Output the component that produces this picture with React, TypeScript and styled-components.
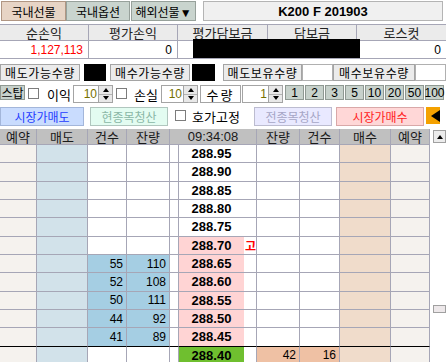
import React from "react";
import styled, { createGlobalStyle } from "styled-components";

const FONT = `"Liberation Sans", "Noto Sans CJK KR", sans-serif`;
const LINE = "#a6a6b6";

const GlobalStyle = createGlobalStyle`
  html, body { margin: 0; padding: 0; background: #fff; }
  body { font-family: ${FONT}; }
  * { box-sizing: border-box; }
`;

const Root = styled.div`
  width: 446px;
  height: 362px;
  overflow: hidden;
  background: #fff;
  display: flex;
  flex-direction: column;
  font-family: ${FONT};
  color: #000;
`;

/* ---------- top tabs ---------- */
const TopBar = styled.div`
  display: flex;
  height: 20px;
  margin-top: 1px;
`;

const Tab = styled.div<{ $active?: boolean; $w: number; $ml: number }>`
  width: ${(p) => p.$w}px;
  margin-left: ${(p) => p.$ml}px;
  height: 20px;
  display: flex;
  align-items: center;
  justify-content: center;
  font-size: 12px;
  background: ${(p) => (p.$active ? "#e7d4c5" : "#c9d4ce")};
  border: 1px solid ${(p) => (p.$active ? "#b09683" : "#97a19b")};
`;

const TitleBox = styled.div`
  margin-left: 7px;
  width: 240px;
  height: 20px;
  display: flex;
  align-items: center;
  justify-content: center;
  background: #f0f0f0;
  border: 1px solid #b4b4b4;
  font-weight: bold;
  font-size: 13px;
`;

/* ---------- info table ---------- */
const InfoGrid = styled.div`
  position: relative;
  margin-top: 3px;
  display: grid;
  grid-template-columns: 89px 89px 90px 89px 89px;
  grid-template-rows: 16px 17px;
  border-top: 1px solid ${LINE};
  border-bottom: 1px solid ${LINE};
`;

const InfoHead = styled.div<{ $last?: boolean }>`
  background: #ebebeb;
  border-right: ${(p) => (p.$last ? "none" : `1px solid ${LINE}`)};
  border-bottom: 1px solid ${LINE};
  display: flex;
  align-items: center;
  justify-content: center;
  font-size: 13px;
  color: #222;
`;

const InfoValue = styled.div<{ $red?: boolean; $last?: boolean }>`
  background: #fff;
  border-right: ${(p) => (p.$last ? "none" : `1px solid ${LINE}`)};
  display: flex;
  align-items: center;
  justify-content: flex-end;
  padding-right: 5px;
  font-size: 12px;
  color: ${(p) => (p.$red ? "#ff0000" : "#000")};
`;

const Redact = styled.div`
  position: absolute;
  left: 193px;
  top: 14px;
  width: 167px;
  height: 19px;
  background: #000;
`;

/* ---------- quantity row ---------- */
const QtyRow = styled.div`
  display: flex;
  margin-top: 5px;
  height: 17px;
`;

const QtyLabel = styled.div<{ $w: number; $ml: number }>`
  width: ${(p) => p.$w}px;
  margin-left: ${(p) => p.$ml}px;
  background: #ebebeb;
  border: 1px solid #a4a4a4;
  display: flex;
  align-items: center;
  justify-content: center;
  font-size: 12px;
  letter-spacing: 0.6px;
`;

const QtyValue = styled.div<{ $w: number; $ml: number; $black?: boolean }>`
  width: ${(p) => p.$w}px;
  margin-left: ${(p) => p.$ml}px;
  background: ${(p) => (p.$black ? "#000" : "#fff")};
  border: 1px solid ${(p) => (p.$black ? "#000" : "#b0b0b0")};
`;

/* ---------- stop row ---------- */
const StopRow = styled.div`
  display: flex;
  align-items: flex-start;
  margin-top: 4px;
  height: 18px;
`;

const GreenButton = styled.div<{ $w: number; $ml: number }>`
  width: ${(p) => p.$w}px;
  margin-left: ${(p) => p.$ml}px;
  height: 15px;
  background: #c7d1cb;
  border: 1px solid #8f9992;
  display: flex;
  align-items: center;
  justify-content: center;
  font-size: 12px;
`;

const CheckBox = styled.span<{ $ml: number; $mt?: number }>`
  display: block;
  width: 11px;
  height: 11px;
  margin-left: ${(p) => p.$ml}px;
  margin-top: ${(p) => p.$mt ?? 3}px;
  background: #fff;
  border: 1px solid #7c7c7c;
`;

const FieldLabel = styled.span<{ $w: number; $ml: number }>`
  width: ${(p) => p.$w}px;
  margin-left: ${(p) => p.$ml}px;
  height: 18px;
  display: flex;
  align-items: center;
  font-size: 13px;
`;

const Spinner = styled.div<{ $w: number; $ml: number }>`
  width: ${(p) => p.$w}px;
  margin-left: ${(p) => p.$ml}px;
  height: 18px;
  display: flex;
  border: 1px solid #a4a4a4;
  background: #fff;
`;

const SpinValue = styled.div`
  flex: 1;
  display: flex;
  align-items: center;
  justify-content: flex-end;
  padding-right: 1px;
  font-size: 12px;
  color: #757000;
`;

const SpinButtons = styled.div`
  width: 14px;
  display: flex;
  flex-direction: column;
  border-left: 1px solid #a4a4a4;
`;

const SpinHalf = styled.div<{ $down?: boolean }>`
  flex: 1;
  background: #e8e8e8;
  display: flex;
  align-items: center;
  justify-content: center;
  border-top: ${(p) => (p.$down ? "1px solid #b4b4b4" : "none")};
`;

const Tri = styled.span<{ $dir: "up" | "down" | "left" }>`
  width: 0;
  height: 0;
  ${(p) =>
    p.$dir === "up"
      ? "border-left: 3px solid transparent; border-right: 3px solid transparent; border-bottom: 4px solid #000;"
      : p.$dir === "down"
      ? "border-left: 3px solid transparent; border-right: 3px solid transparent; border-top: 4px solid #000;"
      : "border-top: 6px solid transparent; border-bottom: 6px solid transparent; border-right: 9px solid #000;"}
`;

const BoxLabel = styled.div<{ $w: number; $ml: number }>`
  width: ${(p) => p.$w}px;
  margin-left: ${(p) => p.$ml}px;
  height: 18px;
  border: 1px solid #a4a4a4;
  background: #fff;
  display: flex;
  align-items: center;
  justify-content: center;
  font-size: 13px;
  letter-spacing: 2px;
`;

/* ---------- action row ---------- */
const ActionRow = styled.div`
  display: flex;
  align-items: flex-start;
  margin-top: 4px;
  height: 19px;
`;

const ActionButton = styled.div<{
  $w: number;
  $ml: number;
  $bg: string;
  $fg: string;
  $bd: string;
}>`
  width: ${(p) => p.$w}px;
  margin-left: ${(p) => p.$ml}px;
  height: 19px;
  background: ${(p) => p.$bg};
  color: ${(p) => p.$fg};
  border: 1px solid ${(p) => p.$bd};
  display: flex;
  align-items: center;
  justify-content: center;
  font-size: 12px;
`;

const OrangeButton = styled.div`
  width: 14px;
  margin-left: 2px;
  height: 17px;
  background: #f4a100;
  display: flex;
  align-items: center;
  justify-content: flex-end;
`;

/* ---------- order book ---------- */
const Book = styled.div`
  display: flex;
  margin-top: 3px;
  flex: 1;
  min-height: 0;
`;

const Grid = styled.div`
  width: 430px;
  display: grid;
  grid-template-columns: 37px 51px 39px 43px 9px 78px 43px 40px 51px 39px;
  grid-template-rows: 16px repeat(11, 18.33px) 18px;
  align-content: start;
`;

const HeadCell = styled.div<{ $span?: number }>`
  grid-column: span ${(p) => p.$span ?? 1};
  background: #c0c0c0;
  border-right: 1px solid ${LINE};
  border-bottom: 1px solid ${LINE};
  display: flex;
  align-items: center;
  justify-content: center;
  font-size: 13px;
  color: #1a1a1a;
`;

const Cell = styled.div<{ $bg?: string; $div?: boolean }>`
  background: ${(p) => p.$bg ?? "#fff"};
  border-right: 1px solid ${LINE};
  border-bottom: 1px solid ${(p) => (p.$div ? "#000" : LINE)};
  display: flex;
  align-items: center;
  justify-content: flex-end;
  padding-right: 3px;
  font-size: 12px;
  overflow: hidden;
`;

const PriceCell = styled.div<{ $div?: boolean }>`
  display: flex;
  border-right: 1px solid ${LINE};
  border-bottom: 1px solid ${(p) => (p.$div ? "#000" : LINE)};
  background: #fff;
`;

const PriceBox = styled.div<{ $bg: string }>`
  width: 65px;
  background: ${(p) => p.$bg};
  display: flex;
  align-items: center;
  justify-content: center;
  font-weight: bold;
  font-size: 13px;
`;

const Marker = styled.div`
  flex: 1;
  display: flex;
  align-items: center;
  padding-left: 1px;
  color: #ff0000;
  font-weight: bold;
  font-size: 12px;
`;

const ScrollTrack = styled.div`
  width: 16px;
  background: #fff;
  display: flex;
  flex-direction: column;
  padding-left: 3px;
`;

const UpButton = styled.div`
  width: 13px;
  height: 13px;
  margin-top: 1px;
  background: #ececec;
  border: 1px solid #a0a0a0;
  display: flex;
  align-items: center;
  justify-content: center;
`;

const Thumb = styled.div`
  width: 13px;
  height: 8px;
  margin-top: 162px;
  background: #ede8ea;
  border: 1px solid #a0a0a0;
`;

type Row = {
  price: string;
  tone: "plain" | "pink" | "green";
  mark?: string;
  sellCnt?: string;
  sellQty?: string;
  buyQty?: string;
  buyCnt?: string;
  divider?: boolean;
};

const rows: Row[] = [
  { price: "288.95", tone: "plain" },
  { price: "288.90", tone: "plain" },
  { price: "288.85", tone: "plain" },
  { price: "288.80", tone: "plain" },
  { price: "288.75", tone: "plain" },
  { price: "288.70", tone: "pink", mark: "고" },
  { price: "288.65", tone: "pink", sellCnt: "55", sellQty: "110" },
  { price: "288.60", tone: "pink", sellCnt: "52", sellQty: "108" },
  { price: "288.55", tone: "pink", sellCnt: "50", sellQty: "111" },
  { price: "288.50", tone: "pink", sellCnt: "44", sellQty: "92" },
  { price: "288.45", tone: "pink", sellCnt: "41", sellQty: "89", divider: true },
  { price: "288.40", tone: "green", buyQty: "42", buyCnt: "16" },
];

const C = {
  reserve: "#f5f2ee",
  sell: "#d2e2ea",
  buy: "#f0dccb",
  blue: "#a5cee3",
  salmon: "#efc1a4",
  pink: "#ffd4d4",
  green: "#6fbf2f",
};

const SpinBox = ({ w, ml, value }: { w: number; ml: number; value: string }) => (
  <Spinner $w={w} $ml={ml}>
    <SpinValue>{value}</SpinValue>
    <SpinButtons>
      <SpinHalf>
        <Tri $dir="up" />
      </SpinHalf>
      <SpinHalf $down>
        <Tri $dir="down" />
      </SpinHalf>
    </SpinButtons>
  </Spinner>
);

export default function App() {
  const heads = ["순손익", "평가손익", "평가담보금", "담보금", "로스컷"];
  const nums = ["1", "2", "3", "5", "10", "20", "50", "100"];
  return (
    <Root>
      <GlobalStyle />
      <TopBar>
        <Tab $active $w={65} $ml={1}>국내선물</Tab>
        <Tab $w={64} $ml={0}>국내옵션</Tab>
        <Tab $w={65} $ml={1}>해외선물▼</Tab>
        <TitleBox>K200 F 201903</TitleBox>
      </TopBar>

      <InfoGrid>
        {heads.map((h, i) => (
          <InfoHead key={h} $last={i === 4}>{h}</InfoHead>
        ))}
        <InfoValue $red>1,127,113</InfoValue>
        <InfoValue>0</InfoValue>
        <InfoValue />
        <InfoValue />
        <InfoValue $last>0</InfoValue>
        <Redact />
      </InfoGrid>

      <QtyRow>
        <QtyLabel $w={80} $ml={0}>매도가능수량</QtyLabel>
        <QtyValue $w={22} $ml={4} $black />
        <QtyLabel $w={80} $ml={4}>매수가능수량</QtyLabel>
        <QtyValue $w={23} $ml={2} $black />
        <QtyLabel $w={79} $ml={8}>매도보유수량</QtyLabel>
        <QtyValue $w={31} $ml={0} />
        <QtyLabel $w={82} $ml={0}>매수보유수량</QtyLabel>
        <QtyValue $w={31} $ml={0} />
      </QtyRow>

      <StopRow>
        <GreenButton $w={25} $ml={0}>스탑</GreenButton>
        <CheckBox $ml={3} />
        <FieldLabel $w={26} $ml={8}>이익</FieldLabel>
        <SpinBox w={40} ml={0} value="10" />
        <CheckBox $ml={3} />
        <FieldLabel $w={26} $ml={7}>손실</FieldLabel>
        <SpinBox w={37} ml={1} value="10" />
        <BoxLabel $w={41} $ml={2}>수량</BoxLabel>
        <SpinBox w={41} ml={1} value="1" />
        {nums.map((n, i) => (
          <GreenButton key={n} $w={19} $ml={i === 0 ? 2 : 1}>{n}</GreenButton>
        ))}
      </StopRow>

      <ActionRow>
        <ActionButton $w={84} $ml={0} $bg="#c9dcfe" $fg="#1f3dff" $bd="#a3b6da">시장가매도</ActionButton>
        <ActionButton $w={78} $ml={6} $bg="#e3fcf1" $fg="#8ab7a6" $bd="#b0c6be">현종목청산</ActionButton>
        <CheckBox $ml={7} $mt={3} />
        <FieldLabel $w={62} $ml={6}>호가고정</FieldLabel>
        <ActionButton $w={78} $ml={0} $bg="#e9e9ff" $fg="#a6a6c6" $bd="#bcbcd0">전종목청산</ActionButton>
        <ActionButton $w={88} $ml={4} $bg="#ffd7d7" $fg="#ff1c1c" $bd="#d9a8a8">시장가매수</ActionButton>
        <OrangeButton>
          <Tri $dir="left" />
        </OrangeButton>
      </ActionRow>

      <Book>
        <Grid>
          <HeadCell>예약</HeadCell>
          <HeadCell>매도</HeadCell>
          <HeadCell>건수</HeadCell>
          <HeadCell>잔량</HeadCell>
          <HeadCell $span={2}>09:34:08</HeadCell>
          <HeadCell>잔량</HeadCell>
          <HeadCell>건수</HeadCell>
          <HeadCell>매수</HeadCell>
          <HeadCell>예약</HeadCell>
          {rows.map((r) => (
            <React.Fragment key={r.price}>
              <Cell $bg={C.reserve} $div={r.divider} />
              <Cell $bg={C.sell} $div={r.divider} />
              <Cell $bg={r.sellCnt ? C.blue : "#fff"} $div={r.divider}>{r.sellCnt}</Cell>
              <Cell $bg={r.sellQty ? C.blue : "#fff"} $div={r.divider}>{r.sellQty}</Cell>
              <Cell $div={r.divider} />
              <PriceCell $div={r.divider}>
                <PriceBox $bg={r.tone === "pink" ? C.pink : r.tone === "green" ? C.green : "#fff"}>
                  {r.price}
                </PriceBox>
                <Marker>{r.mark}</Marker>
              </PriceCell>
              <Cell $bg={r.buyQty ? C.salmon : "#fff"} $div={r.divider}>{r.buyQty}</Cell>
              <Cell $bg={r.buyCnt ? C.salmon : "#fff"} $div={r.divider}>{r.buyCnt}</Cell>
              <Cell $bg={C.buy} $div={r.divider} />
              <Cell $bg={C.reserve} $div={r.divider} />
            </React.Fragment>
          ))}
        </Grid>
        <ScrollTrack>
          <UpButton>
            <Tri $dir="up" />
          </UpButton>
          <Thumb />
        </ScrollTrack>
      </Book>
    </Root>
  );
}
